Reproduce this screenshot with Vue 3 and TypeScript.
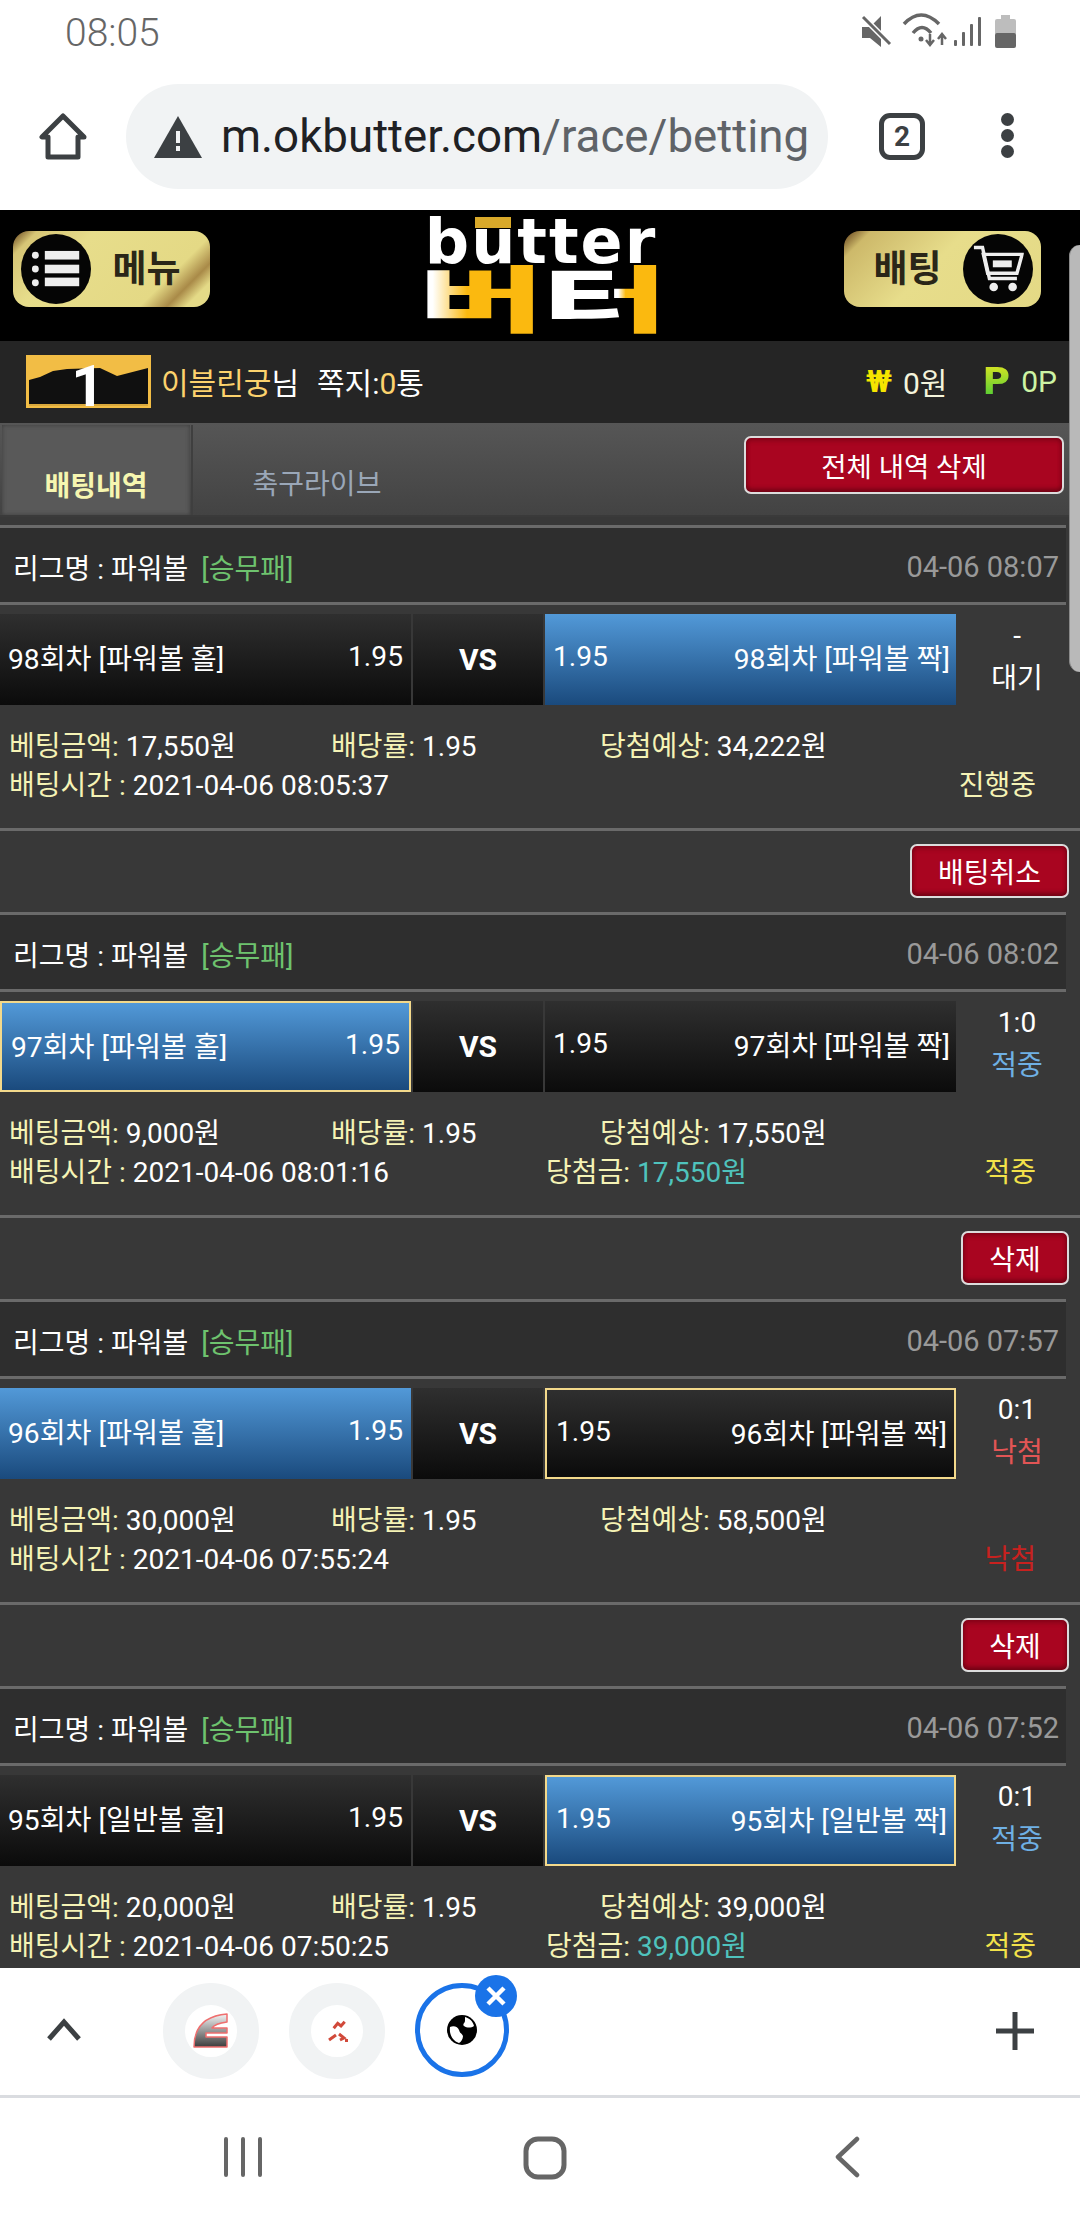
<script setup lang="ts">
interface Bet {
  date: string
  home: string
  away: string
  pick: "home" | "away"
  won: "home" | "away" | null
  score: string
  scoreLabel: string
  scoreClass: string
  amount: string
  expected: string
  time: string
  prize: string | null
  status: string
  statusClass: string
  action: string
}

const bets: Bet[] = [
  {
    date: "04-06 08:07",
    home: "98회차 [파워볼 홀]",
    away: "98회차 [파워볼 짝]",
    pick: "away",
    won: null,
    score: "-",
    scoreLabel: "대기",
    scoreClass: "wait",
    amount: "17,550원",
    expected: "34,222원",
    time: "2021-04-06 08:05:37",
    prize: null,
    status: "진행중",
    statusClass: "running",
    action: "배팅취소",
  },
  {
    date: "04-06 08:02",
    home: "97회차 [파워볼 홀]",
    away: "97회차 [파워볼 짝]",
    pick: "home",
    won: "home",
    score: "1:0",
    scoreLabel: "적중",
    scoreClass: "hit",
    amount: "9,000원",
    expected: "17,550원",
    time: "2021-04-06 08:01:16",
    prize: "17,550원",
    status: "적중",
    statusClass: "win",
    action: "삭제",
  },
  {
    date: "04-06 07:57",
    home: "96회차 [파워볼 홀]",
    away: "96회차 [파워볼 짝]",
    pick: "home",
    won: "away",
    score: "0:1",
    scoreLabel: "낙첨",
    scoreClass: "miss",
    amount: "30,000원",
    expected: "58,500원",
    time: "2021-04-06 07:55:24",
    prize: null,
    status: "낙첨",
    statusClass: "lose",
    action: "삭제",
  },
  {
    date: "04-06 07:52",
    home: "95회차 [일반볼 홀]",
    away: "95회차 [일반볼 짝]",
    pick: "away",
    won: "away",
    score: "0:1",
    scoreLabel: "적중",
    scoreClass: "hit",
    amount: "20,000원",
    expected: "39,000원",
    time: "2021-04-06 07:50:25",
    prize: "39,000원",
    status: "적중",
    statusClass: "win",
    action: "삭제",
  },
]
</script>

<template>
  <div class="phone">
    <div class="statusbar">
      <span class="clock">08:05</span>
      <svg width="200" height="60" viewBox="0 0 200 60">
        <path d="M22 27h8l11-11v31l-11-9h-8z" fill="#666" />
        <path d="M22 16l28 28" stroke="#fff" stroke-width="6" />
        <path d="M23 17l27 27" stroke="#666" stroke-width="3" />
        <g fill="none" stroke="#666" stroke-width="3.5">
          <path d="M64 24Q81 6 99 24" />
          <path d="M73 33Q82 22 91 33" />
        </g>
        <circle cx="81" cy="39" r="2.5" fill="#666" />
        <path d="M90 34v10m-4-4l4 5 4-5M102 45V35m-4 4l4-5 4 5" fill="none" stroke="#666" stroke-width="2.5" />
        <g fill="#666">
          <rect x="114" y="40" width="3" height="6" rx="1" />
          <rect x="122" y="32" width="3" height="14" rx="1" />
          <rect x="130" y="24" width="3" height="22" rx="1" />
          <rect x="138" y="17" width="3" height="29" rx="1" />
          <rect x="155" y="19" width="21" height="16" rx="2" fill="#bdbdbd" />
          <rect x="161" y="15" width="9" height="5" fill="#bdbdbd" />
          <rect x="155" y="33" width="21" height="15" rx="2" />
        </g>
      </svg>
    </div>

    <div class="toolbar">
      <svg class="home" width="48" height="48" viewBox="0 0 48 48">
        <path d="M24 3L3 24h6v20h30V24h6z" fill="none" stroke="#3c4043" stroke-width="5" stroke-linejoin="round" />
      </svg>
      <div class="urlbar">
        <svg width="48" height="42" viewBox="0 0 48 42">
          <path d="M24 0l24 42H0z" fill="#3c4043" />
          <rect x="22" y="15" width="4" height="12" fill="#f1f3f4" />
          <rect x="22" y="30" width="4" height="5" fill="#f1f3f4" />
        </svg>
        <span class="url">m.okbutter.com<span class="url-path">/race/betting</span></span>
      </div>
      <span class="tabcount">2</span>
      <div class="kebab"><i></i><i></i><i></i></div>
    </div>

    <div class="page">
      <header class="sitehead">
        <a class="goldbtn menu">
          <span class="round">
            <svg width="58" height="46" viewBox="0 0 58 46">
              <g fill="#eee">
                <circle cx="5" cy="7" r="4" /><circle cx="5" cy="23" r="4" /><circle cx="5" cy="39" r="4" />
                <rect x="16" y="2" width="40" height="10" /><rect x="16" y="18" width="40" height="10" /><rect x="16" y="33" width="40" height="10" />
              </g>
            </svg>
          </span>
          <span class="goldtext">메뉴</span>
        </a>
        <div class="logo">
          <span class="logo-en">b<span class="logo-u">u<i></i></span>tter</span>
          <span class="logo-kr"><span class="logo-b">버</span><span class="logo-t">터</span></span>
        </div>
        <a class="goldbtn bet">
          <span class="goldtext">배팅</span>
          <span class="round">
            <svg width="60" height="58" viewBox="0 0 60 58">
              <path d="M2 4h10l8 36h32" fill="none" stroke="#eee" stroke-width="4" />
              <path d="M13 12h45l-6 22H18z" fill="none" stroke="#eee" stroke-width="4" />
              <rect x="24" y="19" width="22" height="8" fill="#eee" />
              <circle cx="25" cy="50" r="5" fill="#eee" /><circle cx="47" cy="50" r="5" fill="#eee" />
            </svg>
          </span>
        </a>
      </header>

      <div class="userbar">
        <div class="rank">
          <svg width="125" height="53" viewBox="0 0 125 53">
            <rect width="125" height="53" fill="#f2bd45" />
            <path d="M3 25l11-3 13-6 14-2 33-1 17 8 31-8v37H3z" fill="#101010" />
            <path d="M3 50h119" stroke="#d9a83c" stroke-width="2" />
            <text x="62" y="51" text-anchor="middle" class="rank-no">1</text>
          </svg>
        </div>
        <span class="nick">이블린궁<span class="white">님</span></span>
        <span class="note">쪽지:<span class="nick">0</span>통</span>
        <span class="money">
          <b class="won-sign">₩</b><span class="won-val">0원</span>
          <b class="p-sign">P</b><span class="p-val">0P</span>
        </span>
      </div>

      <div class="tabs">
        <div class="tab active">배팅내역</div>
        <div class="tab">축구라이브</div>
        <button class="redbtn clear">전체 내역 삭제</button>
      </div>

      <section v-for="bet in bets" :key="bet.date" class="bet-item">
        <div class="league">
          <span>리그명 : 파워볼</span>
          <span class="kind">[승무패]</span>
          <span class="date">{{ bet.date }}</span>
        </div>
        <div class="odds">
          <div class="team" :class="{ picked: bet.pick === 'home', chosen: bet.won === 'home' }">
            <span>{{ bet.home }}</span><span>1.95</span>
          </div>
          <div class="vs">VS</div>
          <div class="team away" :class="{ picked: bet.pick === 'away', chosen: bet.won === 'away' }">
            <span>1.95</span><span>{{ bet.away }}</span>
          </div>
          <div class="result">
            <span>{{ bet.score }}</span>
            <span :class="bet.scoreClass">{{ bet.scoreLabel }}</span>
          </div>
        </div>
        <div class="details">
          <div class="line">
            <span class="c1"><em>베팅금액:</em> {{ bet.amount }}</span>
            <span class="c2"><em>배당률:</em> 1.95</span>
            <span><em>당첨예상:</em> {{ bet.expected }}</span>
          </div>
          <div class="line">
            <span class="c3"><em>배팅시간 :</em> {{ bet.time }}</span>
            <span v-if="bet.prize"><em>당첨금:</em> <span class="prize">{{ bet.prize }}</span></span>
            <span class="state" :class="bet.statusClass">{{ bet.status }}</span>
          </div>
        </div>
        <div class="actions">
          <button class="redbtn" :class="bet.action === '삭제' ? 'small' : 'wide'">{{ bet.action }}</button>
        </div>
      </section>

      <div class="scrollthumb"></div>
    </div>

    <div class="tabstrip">
      <svg class="chev" width="34" height="24" viewBox="0 0 34 24">
        <path d="M2 21L17 4l15 17" fill="none" stroke="#3c4043" stroke-width="5" />
      </svg>
      <div class="bubble">
        <svg width="36" height="36" viewBox="0 0 36 36">
          <defs>
            <linearGradient id="eg" x1="0" y1="0" x2="0" y2="1">
              <stop offset="0" stop-color="#f4f4f4" />
              <stop offset="1" stop-color="#3d3d3d" />
            </linearGradient>
          </defs>
          <path d="M1 34C1 15 10 3 34 1V9C26 10 21 12 19 15H34V20H13V24H34V34Z" fill="url(#eg)" stroke="#ef6f6f" stroke-width="1.5" stroke-linejoin="round" />
        </svg>
      </div>
      <div class="bubble">
        <svg width="24" height="24" viewBox="0 0 24 24">
          <g fill="none" stroke="#d1493a" stroke-width="3">
            <path d="M8.7 9.3L12.7 4.3 16 7 19.7 2.7" />
            <path d="M4 21L11 16" />
            <path d="M14 15L19 19 15 21" />
          </g>
          <rect x="20" y="20" width="3" height="3" fill="#d1493a" />
        </svg>
      </div>
      <div class="bubble current">
        <svg width="30" height="30" viewBox="0 0 30 30">
          <circle cx="15" cy="15" r="15" fill="#000" />
          <path d="M3 12c4-2 8 0 9 3 1 4 3 3 4 6 0 3-2 6-4 7C6 26 2 20 3 12zM18 2c4 1 8 4 9 9-3 2-7 2-10 0-2-2 1-3 1-5z" fill="#fff" />
        </svg>
        <span class="closer">
          <svg width="22" height="22" viewBox="0 0 22 22">
            <path d="M3 3l16 16M19 3L3 19" stroke="#fff" stroke-width="4.5" />
          </svg>
        </span>
      </div>
      <svg class="plus" width="38" height="38" viewBox="0 0 38 38">
        <path d="M19 0v38M0 19h38" stroke="#3c4043" stroke-width="5" />
      </svg>
    </div>

    <nav class="softkeys">
      <svg width="40" height="42" viewBox="0 0 40 42">
        <path d="M3 3v36M20 3v36M37 3v36" stroke="#666" stroke-width="4" stroke-linecap="round" />
      </svg>
      <svg width="44" height="44" viewBox="0 0 44 44">
        <rect x="3" y="3" width="38" height="38" rx="12" fill="none" stroke="#666" stroke-width="5" />
      </svg>
      <svg width="26" height="42" viewBox="0 0 26 42">
        <path d="M23 3L4 21l19 18" fill="none" stroke="#666" stroke-width="4.5" stroke-linecap="round" stroke-linejoin="round" />
      </svg>
    </nav>
  </div>
</template>

<style>
html,
body {
  margin: 0;
  background: #fff;
}
</style>

<style scoped>
.phone {
  width: 1080px;
  height: 2220px;
  display: flex;
  flex-direction: column;
  overflow: hidden;
  background: #fff;
  font-family: Roboto, "Noto Sans CJK KR", sans-serif;
}

/* browser chrome */
.statusbar {
  height: 72px;
  flex: none;
  display: flex;
  align-items: flex-start;
  justify-content: space-between;
  padding: 0 40px 0 65px;
}
.clock {
  font-size: 39px;
  line-height: 66px;
  font-weight: 300;
  color: #666;
}
.toolbar {
  height: 138px;
  flex: none;
  box-sizing: border-box;
  display: flex;
  align-items: flex-start;
  padding: 12px 0 0 39px;
}
.home {
  margin-top: 29px;
}
.urlbar {
  width: 702px;
  height: 105px;
  margin-left: 39px;
  border-radius: 53px;
  background: #f1f3f4;
  display: flex;
  align-items: center;
  padding-left: 28px;
  box-sizing: border-box;
}
.url {
  margin-left: 19px;
  font-size: 45.7px;
  color: #202124;
  white-space: nowrap;
  line-height: 105px;
}
.url-path {
  color: #5f6368;
}
.tabcount {
  width: 46px;
  height: 47px;
  margin: 29px 0 0 51px;
  box-sizing: border-box;
  border: 5px solid #3c4043;
  border-radius: 11px;
  font-size: 28px;
  font-weight: 700;
  line-height: 37px;
  text-align: center;
  color: #3c4043;
}
.kebab {
  margin: 29px 0 0 76px;
  display: flex;
  flex-direction: column;
  gap: 3px;
}
.kebab i {
  width: 13px;
  height: 13px;
  border-radius: 50%;
  background: #3c4043;
}

/* site */
.page {
  flex: 1;
  min-height: 0;
  position: relative;
  overflow: hidden;
  background: #383838;
  color: #fff;
}
.sitehead {
  height: 131px;
  background: #000;
  display: flex;
  align-items: flex-start;
  justify-content: space-between;
  padding: 21px 39px 0 13px;
  box-sizing: border-box;
  position: relative;
}
.goldbtn {
  width: 197px;
  height: 76px;
  border-radius: 16px;
  display: flex;
  align-items: center;
  justify-content: space-between;
  padding: 0 8px;
  box-sizing: border-box;
}
.menu {
  background: linear-gradient(135deg, #5f3d18 0%, #d7c676 9%, #e7dd8b 30%, #e4d985 74%, #a98a48 84%, #e4da87 91%);
}
.bet {
  background: linear-gradient(135deg, #5f3d18 0%, #cdb96a 10%, #e7dd8b 45%, #e4d985 100%);
}
.round {
  width: 70px;
  height: 70px;
  border-radius: 50%;
  background: #050505;
  display: flex;
  align-items: center;
  justify-content: center;
  flex: none;
}
.round svg {
  transform: scale(0.86);
}
.goldtext {
  font-size: 37px;
  font-weight: 700;
  color: #2a2618;
  line-height: 1;
  flex: 1;
  text-align: center;
}
.logo {
  position: absolute;
  left: 426px;
  top: 6px;
  width: 230px;
  display: flex;
  flex-direction: column;
  align-items: center;
}
.logo-en {
  font-family: "DejaVu Sans", sans-serif;
  font-weight: 700;
  font-size: 62px;
  line-height: 52px;
  letter-spacing: 2px;
  color: #fff;
  white-space: nowrap;
}
.logo-u {
  position: relative;
}
.logo-u i {
  position: absolute;
  left: 4px;
  right: 6px;
  top: 12px;
  height: 11px;
  background: #d9a92a;
}
.logo-kr {
  font-weight: 900;
  font-size: 72px;
  line-height: 68px;
  white-space: nowrap;
  transform: scaleX(1.92);
  letter-spacing: -2px;
}
.logo-b,
.logo-t {
  -webkit-background-clip: text;
  background-clip: text;
  color: transparent;
}
.logo-b {
  background-image: linear-gradient(90deg, #fff 12%, #fbb90f 40%);
}
.logo-t {
  background-image: linear-gradient(90deg, #fff 62%, #fbb90f 68%);
}
.userbar {
  height: 82px;
  background: #252525;
  display: flex;
  align-items: center;
  font-size: 30px;
  padding-left: 26px;
  white-space: nowrap;
  padding-bottom: 2px;
  box-sizing: border-box;
}
.rank {
  width: 125px;
  height: 53px;
  margin-right: 10px;
  flex: none;
}
.rank svg {
  display: block;
}
.rank-no {
  font-family: Roboto, sans-serif;
  font-weight: 700;
  font-size: 58px;
  fill: #fff;
}
.nick {
  color: #fcd26d;
}
.white {
  color: #fff;
}
.note {
  margin-left: 18px;
  color: #fff;
}
.money {
  margin-left: auto;
  display: flex;
  align-items: center;
  padding-right: 23px;
}
.won-sign {
  color: #f5e500;
  font-size: 32px;
  margin-right: 11px;
}
.won-val {
  color: #f4f4dc;
}
.p-sign {
  margin-left: 35px;
  margin-right: 11px;
  font-size: 38px;
  font-family: "DejaVu Sans", sans-serif;
  background: linear-gradient(#f0e820, #38c838);
  -webkit-background-clip: text;
  background-clip: text;
  color: transparent;
}
.p-val {
  color: #cdf3a4;
}
.tabs {
  height: 94px;
  background: linear-gradient(#565656, #434343);
  display: flex;
  align-items: flex-start;
  box-sizing: border-box;
  padding-top: 2px;
  border-bottom: 2px solid #3a3a3a;
  position: relative;
}
.tab {
  width: 188px;
  height: 90px;
  text-align: center;
  font-size: 28px;
  line-height: 120px;
  color: #9aa7b8;
  font-weight: 400;
}
.tab + .tab {
  margin-left: 3px;
  width: 248px;
  box-shadow: -2px 0 0 #3f3f3f;
}
.tab.active {
  margin-left: 2px;
  background: #595959;
  box-shadow: inset 0 0 4px #3c3c3c;
  color: #f6f6b0;
  font-weight: 700;
  font-size: 28px;
  line-height: 123px;
}
.redbtn {
  background: #a90520;
  border: 2px solid #dcdcdc;
  border-radius: 7px;
  color: #fff;
  font-family: inherit;
  font-size: 28px;
  height: 54px;
  padding: 0;
  box-shadow: inset 0 -3px 4px rgba(60, 0, 10, 0.5), inset 0 3px 4px rgba(60, 0, 10, 0.3);
}
.clear {
  width: 320px;
  height: 58px;
  position: absolute;
  left: 744px;
  top: 13px;
  font-size: 27.5px;
}
.wide {
  width: 159px;
}
.small {
  width: 108px;
}

/* bet list */
.bet-item {
  height: 387px;
  box-sizing: border-box;
  font-size: 28px;
}
.bet-item:first-of-type {
  margin-top: 8px;
}
.league {
  height: 80px;
  margin-right: 14px;
  border-top: 3px solid #6a6a6a;
  border-bottom: 3px solid #6a6a6a;
  background: #2e2e2e;
  display: flex;
  align-items: center;
  padding: 4px 7px 0 13px;
  box-sizing: border-box;
}
.kind {
  margin-left: 13px;
  color: #6ec36e;
}
.date {
  margin-left: auto;
  color: #999;
  font-size: 29px;
}
.odds {
  margin-top: 9px;
  height: 91px;
  display: grid;
  grid-template-columns: 411px 130px 411px 118px;
  column-gap: 2px;
}
.team {
  background: linear-gradient(#2f2f2f, #0b0b0b);
  display: flex;
  align-items: center;
  justify-content: space-between;
  padding: 0 8px 6px;
  box-sizing: border-box;
  font-size: 28.2px;
}
.team.picked {
  background: linear-gradient(#5299d8, #1a4a7d);
}
.team.chosen {
  border: 2px solid #f3d98b;
  padding: 0 9px 4px;
}
.team.away {
  padding-right: 6px;
}
.team.away.chosen {
  padding-right: 7px;
}
.vs {
  background: linear-gradient(#2f2f2f, #0b0b0b);
  display: flex;
  align-items: center;
  justify-content: center;
  font-weight: 700;
  font-size: 30px;
}
.result {
  display: flex;
  flex-direction: column;
  align-items: center;
  line-height: 43px;
}
.hit {
  color: #6fb0e4;
}
.miss {
  color: #e25555;
}
.details {
  margin-top: 22px;
  height: 101px;
  padding-left: 9px;
  box-sizing: border-box;
}
.line {
  height: 39px;
  line-height: 39px;
  display: flex;
  white-space: nowrap;
  position: relative;
}
.details em {
  font-style: normal;
  color: #f5f3b5;
}
.c1 {
  width: 322px;
}
.c2 {
  width: 269px;
}
.c3 {
  width: 537px;
}
.prize {
  color: #4fc3bd;
}
.state {
  position: absolute;
  right: 44px;
}
.running {
  color: #f5f3b5;
}
.win {
  color: #f3e24a;
}
.lose {
  color: #c8211f;
}
.actions {
  border-top: 3px solid #6a6a6a;
  height: 84px;
  box-sizing: border-box;
  padding: 13px 11px 0 0;
  display: flex;
  justify-content: flex-end;
}
.scrollthumb {
  position: absolute;
  right: 0;
  top: 35px;
  width: 11px;
  height: 427px;
  background: #b9b9b9;
  border-radius: 14px 0 0 14px;
  border-left: 1px solid #8a8a8a;
  box-sizing: border-box;
}

/* bottom tabs */
.tabstrip {
  height: 130px;
  flex: none;
  box-sizing: border-box;
  border-bottom: 3px solid #dadce0;
  display: flex;
  align-items: flex-start;
  padding: 15px 46px 0 47px;
}
.chev {
  margin: 35px 82px 0 0;
}
.bubble {
  width: 96px;
  height: 96px;
  box-sizing: border-box;
  border: 22px solid #f1f3f4;
  border-radius: 50%;
  margin-right: 30px;
  display: flex;
  align-items: center;
  justify-content: center;
  position: relative;
  flex: none;
}
.bubble.current {
  border: 5px solid #1a73e8;
  width: 94px;
  height: 94px;
  margin-right: 0;
}
.closer {
  position: absolute;
  top: -13px;
  right: -13px;
  width: 42px;
  height: 42px;
  border-radius: 50%;
  background: #1a73e8;
  display: flex;
  align-items: center;
  justify-content: center;
}
.plus {
  margin: 29px 0 0 auto;
}
.softkeys {
  height: 122px;
  flex: none;
  box-sizing: border-box;
  display: grid;
  grid-template-columns: repeat(3, 302px);
  justify-content: center;
  justify-items: center;
  padding: 38px 0 0 10px;
  align-content: start;
}
</style>
